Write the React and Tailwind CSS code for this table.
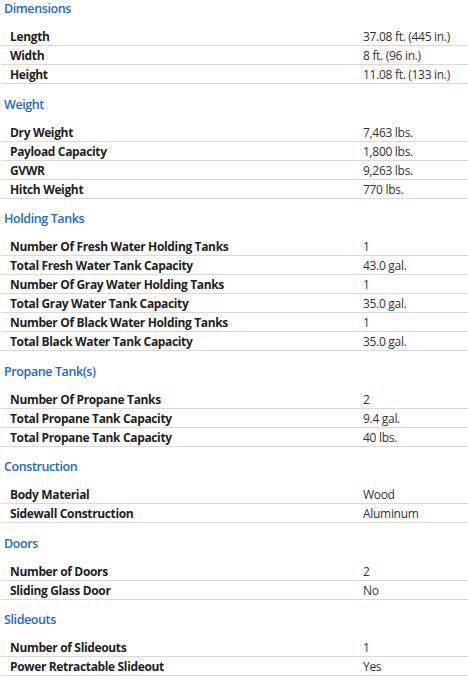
const sections = [
  { title: "Dimensions", rows: [["Length", "37.08 ft. (445 in.)"], ["Width", "8 ft. (96 in.)"], ["Height", "11.08 ft. (133 in.)"]] },
  { title: "Weight", rows: [["Dry Weight", "7,463 lbs."], ["Payload Capacity", "1,800 lbs."], ["GVWR", "9,263 lbs."], ["Hitch Weight", "770 lbs."]] },
  { title: "Holding Tanks", rows: [
    ["Number Of Fresh Water Holding Tanks", "1"],
    ["Total Fresh Water Tank Capacity", "43.0 gal."],
    ["Number Of Gray Water Holding Tanks", "1"],
    ["Total Gray Water Tank Capacity", "35.0 gal."],
    ["Number Of Black Water Holding Tanks", "1"],
    ["Total Black Water Tank Capacity", "35.0 gal."],
  ] },
  { title: "Propane Tank(s)", rows: [["Number Of Propane Tanks", "2"], ["Total Propane Tank Capacity", "9.4 gal."], ["Total Propane Tank Capacity", "40 lbs."]] },
  { title: "Construction", rows: [["Body Material", "Wood"], ["Sidewall Construction", "Aluminum"]] },
  { title: "Doors", rows: [["Number of Doors", "2"], ["Sliding Glass Door", "No"]] },
  { title: "Slideouts", rows: [["Number of Slideouts", "1"], ["Power Retractable Slideout", "Yes"]] },
];

export default function App() {
  return (
    <div className="w-[468px] h-[683px] bg-white overflow-hidden" style={{ fontFamily: '"Open Sans", "Noto Sans", sans-serif' }}>
      {sections.map((s, i) => (
        <div key={s.title} className={i === 0 ? "" : "pt-[11.5px]"}>
          <div className="h-[18px] flex items-center pl-[4px] pt-px text-[12.5px] font-semibold tracking-[-0.4px] text-[#2469c4] leading-none">{s.title}</div>
          <div className="mt-[9px] ml-px">
            {s.rows.map(([k, v], j) => (
              <div key={j} className="h-[19px] pt-[2px] border-b border-[#dadada] flex items-center text-[12px] leading-none">
                <div className="w-[362px] pl-[9px] font-bold tracking-[-0.35px] text-[#1e1e1e]">{k}</div>
                <div className="flex-1 tracking-[-0.3px] text-[#333]">{v}</div>
              </div>
            ))}
          </div>
        </div>
      ))}
    </div>
  );
}
